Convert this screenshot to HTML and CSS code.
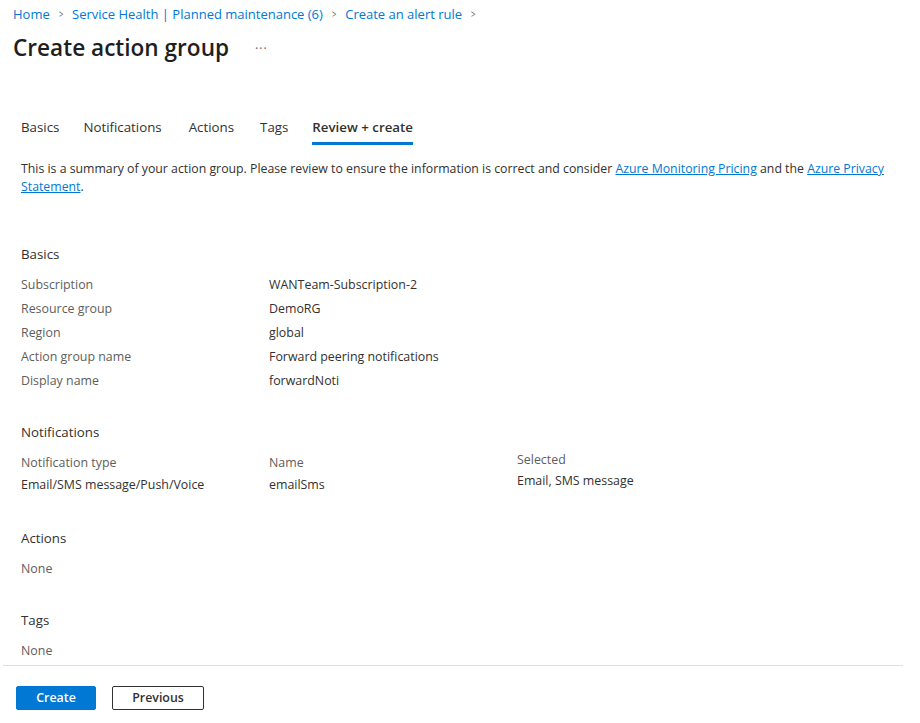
FILE: index.html
```html
<!DOCTYPE html>
<html>
<head>
<meta charset="utf-8">
<link rel="stylesheet" href="styles.css">
</head>
<body>
<div class="page">
  <nav class="crumbs">
    <a class="crumb">Home</a><span class="chev">&gt;</span>
    <a class="crumb">Service Health | Planned maintenance (6)</a><span class="chev">&gt;</span>
    <a class="crumb">Create an alert rule</a><span class="chev">&gt;</span>
  </nav>
  <header class="title-row">
    <h1 class="title">Create action group</h1>
    <span class="more">···</span>
  </header>
  <div class="tabs">
    <span class="tab t1">Basics</span>
    <span class="tab t2">Notifications</span>
    <span class="tab t3">Actions</span>
    <span class="tab t4">Tags</span>
    <span class="tab active">Review + create</span>
  </div>
  <main class="content">
    <p class="intro">This is a summary of your action group. Please review to ensure the information is correct and consider <a class="link">Azure Monitoring Pricing</a> and the <a class="link">Azure Privacy Statement</a>.</p>

    <section class="sec sec-basics">
      <h2 class="sec-title">Basics</h2>
      <div class="kv">
        <div class="k">Subscription</div><div class="v">WANTeam-Subscription-2</div>
        <div class="k">Resource group</div><div class="v">DemoRG</div>
        <div class="k">Region</div><div class="v">global</div>
        <div class="k">Action group name</div><div class="v">Forward peering notifications</div>
        <div class="k">Display name</div><div class="v">forwardNoti</div>
      </div>
    </section>

    <section class="sec sec-notif">
      <h2 class="sec-title">Notifications</h2>
      <div class="ntable">
        <div class="ncol">
          <div class="nh">Notification type</div>
          <div class="nv">Email/SMS message/Push/Voice</div>
        </div>
        <div class="ncol">
          <div class="nh">Name</div>
          <div class="nv">emailSms</div>
        </div>
        <div class="ncol up">
          <div class="nh">Selected</div>
          <div class="nv">Email, SMS message</div>
        </div>
      </div>
    </section>

    <section class="sec sec-actions">
      <h2 class="sec-title">Actions</h2>
      <div class="none">None</div>
    </section>

    <section class="sec sec-tags">
      <h2 class="sec-title">Tags</h2>
      <div class="none">None</div>
    </section>
  </main>
  <footer class="footer">
    <button class="btn primary">Create</button>
    <button class="btn secondary">Previous</button>
  </footer>
</div>
</body>
</html>
```

FILE: styles.css
```css
* { box-sizing: border-box; }
html, body { margin: 0; padding: 0; background: #fff; }
body {
  font-family: "Segoe UI", "Open Sans", "Noto Sans", "Liberation Sans", sans-serif;
  color: #323130;
  width: 920px;
  height: 723px;
  overflow: hidden;
}
.page { display: block; }

.crumbs {
  display: flex;
  align-items: flex-start;
  padding: 5px 0 0 13px;
  height: 28px;
  font-size: 13px;
  line-height: 18px;
}
.crumb { color: #0078d4; }
.chev {
  color: #605e5c;
  font-size: 11px;
  margin: 0 8px;
  display: inline-block;
  transform: scaleX(0.7);
}

.title-row {
  display: flex;
  align-items: center;
  margin-top: 5px;
  padding-left: 13px;
  height: 30px;
}
.title {
  margin: 0;
  font-size: 22.6px;
  font-weight: 600;
  color: #201f1e;
  line-height: 30px;
}
.more {
  margin-left: 26px;
  color: #605e5c;
  font-size: 12px;
  letter-spacing: 1px;
}

.tabs {
  display: flex;
  padding: 47px 0 0 21px;
}
.tab {
  font-size: 13.3px;
  line-height: 20px;
  padding: 7px 0 5px;
  border-bottom: 3px solid transparent;
  height: 35px;
  color: #323130;
}
.t1 { margin-right: 24px; }
.t2 { margin-right: 27px; }
.t3 { margin-right: 26px; }
.t4 { margin-right: 24px; }
.tab.active { font-weight: 600; border-bottom-color: #0078d4; }

.content { padding: 0 21px; }
.intro {
  margin: 15px 0 0;
  font-size: 12.3px;
  line-height: 18px;
  max-width: 878px;
}
.link { color: #0078d4; text-decoration: underline; }

.sec-title {
  margin: 0;
  font-size: 13.3px;
  font-weight: 400;
  line-height: 20px;
  color: #323130;
}
.sec-basics { margin-top: 48px; }
.kv {
  display: grid;
  grid-template-columns: 248px 1fr;
  grid-auto-rows: 24px;
  margin-top: 9px;
  font-size: 12.4px;
  line-height: 24px;
}
.k { color: #605e5c; }
.v { color: #323130; }

.sec-notif { margin-top: 29px; }
.ntable { display: flex; margin-top: 10px; font-size: 12.4px; line-height: 22px; }
.ncol { width: 248px; }
.ncol.up { margin-top: -3px; }
.ncol.up .nv { margin-top: -1px; }
.nh { color: #605e5c; }
.nv { color: #323130; }

.sec-actions { margin-top: 32px; }
.sec-tags { margin-top: 31px; }
.none {
  margin-top: 11px;
  font-size: 12.4px;
  line-height: 20px;
  color: #605e5c;
}

.footer {
  border-top: 1px solid #e1dfdd;
  margin: 4px 17px 0 3px;
  padding: 20px 0 0 13px;
  display: flex;
  gap: 16px;
  align-items: flex-start;
}
.btn {
  font-family: inherit;
  font-size: 12.4px;
  font-weight: 600;
  height: 24px;
  padding: 0;
  border-radius: 2px;
  line-height: 20px;
}
.btn.primary {
  width: 80px;
  background: #0078d4;
  color: #fff;
  border: 1px solid #0078d4;
}
.btn.secondary {
  width: 92px;
  background: #fff;
  color: #323130;
  border: 1px solid #323130;
}
```
